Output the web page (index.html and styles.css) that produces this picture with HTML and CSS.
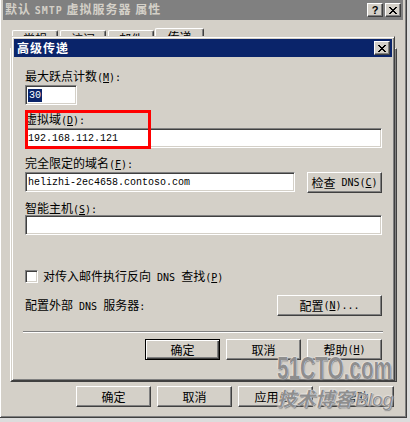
FILE: index.html
```html
<!DOCTYPE html>
<html>
<head>
<meta charset="utf-8">
<link rel="stylesheet" href="styles.css">
</head>
<body>
<div class="win">
  <div class="cap">
    <span class="cap-text">默认 <span class="hb">SMTP</span> 虚拟服务器 属性</span>
    <div class="cap-btns">
      <span class="cbtn q">?</span>
      <span class="cbtn"><svg width="8" height="7" viewBox="0 0 8 7" shape-rendering="crispEdges"><path d="M0 0h2v1H0zM6 0h2v1H6zM1 1h2v1H1zM5 1h2v1H5zM2 2h4v1H2zM3 3h2v1H3zM2 4h4v1H2zM1 5h2v1H1zM5 5h2v1H5zM0 6h2v1H0zM6 6h2v1H6z" fill="#000"/></svg></span>
    </div>
  </div>
  <div class="tabs">
    <span class="tab">常规</span><span class="tab">访问</span><span class="tab">邮件</span><span class="tab sel">传递</span>
  </div>
  <div class="pane"></div>
  <div class="btnrow">
    <span class="btn">确定</span>
    <span class="btn">取消</span>
    <span class="btn">应用<span class="h">(<u>A</u>)</span></span>
    <span class="btn">帮助</span>
  </div>
</div>

<div class="dlg">
  <div class="dtitle">
    <span class="dtitle-text">高级传递</span>
    <span class="cbtn"><svg width="8" height="7" viewBox="0 0 8 7" shape-rendering="crispEdges"><path d="M0 0h2v1H0zM6 0h2v1H6zM1 1h2v1H1zM5 1h2v1H5zM2 2h4v1H2zM3 3h2v1H3zM2 4h4v1H2zM1 5h2v1H1zM5 5h2v1H5zM0 6h2v1H0zM6 6h2v1H6z" fill="#000"/></svg></span>
  </div>
  <div class="dbody">
    <div class="lbl l1">最大跃点计数<span class="h">(<u>M</u>):</span></div>
    <div class="edit e1"><span class="selected">30</span></div>
    <div class="lbl l2">虚拟域<span class="h">(<u>D</u>):</span></div>
    <div class="edit e2">192.168.112.121</div>
    <div class="lbl l3">完全限定的域名<span class="h">(<u>F</u>):</span></div>
    <div class="row3">
      <div class="edit e3">helizhi-2ec4658.contoso.com</div>
      <span class="btn">检查<span class="h"> DNS(<u>C</u>)</span></span>
    </div>
    <div class="lbl l4">智能主机<span class="h">(<u>S</u>):</span></div>
    <div class="edit e4"></div>
    <div class="cbrow"><span class="cb"></span><span class="cbtext">对传入邮件执行反向<span class="h"> DNS </span>查找<span class="h">(<u>P</u>)</span></span></div>
    <div class="cfgrow">
      <span class="cfglbl">配置外部<span class="h"> DNS </span>服务器<span class="h">:</span></span>
      <span class="btn wide">配置<span class="h">(<u>N</u>)...</span></span>
    </div>
    <div class="sep"></div>
    <div class="dbtns">
      <span class="btn def">确定</span>
      <span class="btn">取消</span>
      <span class="btn">帮助<span class="h">(<u>H</u>)</span></span>
    </div>
  </div>
  <div class="redbox"></div>
</div>

<div class="wm">
  <div class="wm1">51CTO.com</div>
  <div class="wm2">技术博客<span class="wmblog">Blog</span></div>
</div>
</body>
</html>
```

FILE: styles.css
```css
html, body {
  margin: 0;
  padding: 0;
}
body {
  width: 410px;
  height: 422px;
  overflow: hidden;
  position: relative;
  background: #dcdcdc;
  font-family: "Noto Sans CJK SC", "Liberation Sans", sans-serif;
  font-size: 12px;
  color: #000;
}
.h {
  font-family: "DejaVu Sans Mono", monospace;
  font-size: 10px;
  line-height: 13px;
}
.hb {
  font-family: "DejaVu Sans Mono", monospace;
  font-size: 10px;
  font-weight: bold;
}
u {
  text-decoration-thickness: 1px;
  text-underline-offset: 1px;
}

/* outer window */
.win {
  box-sizing: border-box;
  width: 408px;
  height: 422px;
  margin: -4px 0 0 -1px;
  background: #d4d0c8;
  border: 1px solid;
  border-color: #d4d0c8 #404040 #404040 #d4d0c8;
  box-shadow: inset 1px 1px #fff, inset -1px -1px #808080;
  padding: 3px;
  display: flex;
  flex-direction: column;
}
.cap {
  flex: none;
  height: 20px;
  background: #808080;
  display: flex;
  align-items: center;
  justify-content: space-between;
  padding: 0 2px 0 2px;
}
.cap-text {
  color: #d4d0c8;
  font-weight: bold;
  letter-spacing: 1px;
  line-height: 14px;
  white-space: nowrap;
}
.cap-btns {
  display: flex;
  gap: 2px;
}
.cbtn {
  box-sizing: border-box;
  width: 16px;
  height: 14px;
  display: flex;
  align-items: center;
  justify-content: center;
  background: #d4d0c8;
  border: 1px solid;
  border-color: #fff #404040 #404040 #fff;
  box-shadow: inset -1px -1px #808080;
}
.cbtn svg {
  display: block;
}
.cbtn.q {
  font-family: "Liberation Sans", sans-serif;
  font-weight: bold;
  font-size: 11px;
  line-height: 12px;
}
.tabs {
  flex: none;
  height: 20px;
  margin-top: 8px;
  padding-left: 9px;
  display: flex;
  align-items: flex-end;
}
.tab {
  box-sizing: border-box;
  width: 46px;
  height: 18px;
  margin-right: 2px;
  border: 1px solid;
  border-bottom: none;
  border-color: #fff #404040 transparent #fff;
  border-radius: 2px 2px 0 0;
  box-shadow: inset -1px 0 #808080;
  text-align: center;
  line-height: 16px;
}
.tab.sel {
  width: 49px;
  height: 20px;
  margin-left: -1px;
}
.pane {
  flex: 1;
  margin: 0 6px 0 7px;
  border: 1px solid;
  border-color: #fff #404040 #404040 #fff;
  box-shadow: inset -1px -1px #808080;
}
.btnrow {
  flex: none;
  height: 21px;
  margin: 4px 0 7px;
  padding-right: 9px;
  display: flex;
  justify-content: flex-end;
  gap: 6px;
}
.btn {
  box-sizing: border-box;
  width: 75px;
  height: 21px;
  display: flex;
  align-items: center;
  justify-content: center;
  white-space: pre;
  line-height: 13px;
  background: #d4d0c8;
  border: 1px solid;
  border-color: #fff #404040 #404040 #fff;
  box-shadow: inset -1px -1px #808080;
}
.btn.def {
  border-color: #000;
  box-shadow: inset 1px 1px #fff, inset -1px -1px #404040, inset -2px -2px #808080;
}
.btn.wide {
  width: 105px;
}

/* dialog */
.dlg {
  position: absolute;
  left: 11px;
  top: 36px;
  width: 384px;
  height: 345px;
  box-sizing: border-box;
  background: #d4d0c8;
  border: 1px solid;
  border-color: #d4d0c8 #404040 #404040 #d4d0c8;
  box-shadow: inset 1px 1px #fff, inset -1px -1px #808080;
  padding: 2px;
  display: flex;
  flex-direction: column;
}
.dtitle {
  flex: none;
  height: 18px;
  background: #0a246a;
  display: flex;
  align-items: center;
  justify-content: space-between;
  padding: 0 2px 0 3px;
}
.dtitle-text {
  color: #fff;
  font-weight: bold;
  letter-spacing: 1px;
  line-height: 14px;
}
.dbody {
  padding: 12px 10px 0 11px;
  display: flex;
  flex-direction: column;
}
.lbl {
  height: 13px;
  line-height: 13px;
  white-space: nowrap;
}
.l2 { margin-top: 7px; }
.l3 { margin-top: 8px; }
.l4 { margin-top: 8px; }
.edit {
  box-sizing: border-box;
  height: 20px;
  background: #fff;
  border: 1px solid;
  border-color: #808080 #fff #fff #808080;
  box-shadow: inset 1px 1px #404040, inset -1px -1px #d4d0c8;
  padding-left: 2px;
  display: flex;
  align-items: center;
  font-family: "Liberation Mono", monospace;
  font-size: 10px;
  white-space: pre;
}
.e1 {
  width: 52px;
  margin-top: 3px;
}
.selected {
  background: #0a246a;
  color: #fff;
  padding: 0 1px;
  line-height: 13px;
}
.e2 { margin-top: 3px; }
.row3 {
  margin-top: 3px;
  height: 21px;
  display: flex;
  justify-content: space-between;
  align-items: flex-start;
}
.e3 { width: 270px; }
.e4 { margin-top: 1px; }
.cbrow {
  margin-top: 35px;
  height: 13px;
  display: flex;
  align-items: center;
  gap: 5px;
}
.cb {
  box-sizing: border-box;
  width: 13px;
  height: 13px;
  background: #fff;
  border: 1px solid;
  border-color: #808080 #fff #fff #808080;
  box-shadow: inset 1px 1px #404040, inset -1px -1px #d4d0c8;
}
.cbtext {
  line-height: 13px;
  white-space: pre;
}
.cfgrow {
  margin-top: 12px;
  height: 21px;
  display: flex;
  justify-content: space-between;
  align-items: center;
}
.cfglbl {
  white-space: pre;
  line-height: 13px;
}
.sep {
  margin: 15px -1px 0 -2px;
  height: 0;
  border-top: 1px solid #808080;
  border-bottom: 1px solid #fff;
}
.dbtns {
  margin-top: 6px;
  display: flex;
  justify-content: flex-end;
  gap: 6px;
}
.redbox {
  position: absolute;
  left: 13px;
  top: 73px;
  width: 126px;
  height: 39px;
  box-sizing: border-box;
  border: 3px solid #f00;
}

/* watermark */
.wm {
  position: absolute;
  left: 277px;
  top: 352px;
  width: 118px;
  color: #8e8e8e;
  text-shadow: 0 0 1px #fff, 0 0 2px #fff, 1px 1px 1px #666;
  pointer-events: none;
}
.wm1 {
  font-family: "Liberation Sans", sans-serif;
  font-weight: bold;
  font-size: 31px;
  line-height: 34px;
  width: 175px;
  transform: scaleX(0.67);
  transform-origin: left top;
  white-space: nowrap;
}
.wm2 {
  font-family: "Noto Sans CJK SC", sans-serif;
  font-weight: bold;
  font-size: 19px;
  line-height: 24px;
  white-space: nowrap;
  font-style: italic;
}
.wmblog {
  font-family: "Liberation Sans", sans-serif;
  font-weight: normal;
  font-size: 19px;
  margin-left: 2px;
}
```
